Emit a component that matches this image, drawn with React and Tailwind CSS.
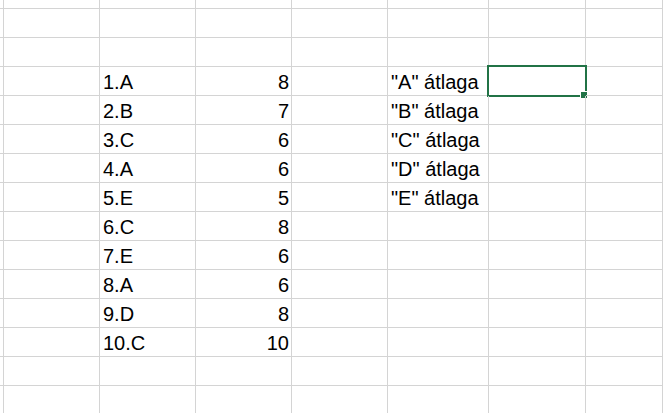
const labels = ["1.A", "2.B", "3.C", "4.A", "5.E", "6.C", "7.E", "8.A", "9.D", "10.C"];
const values = [8, 7, 6, 6, 5, 8, 6, 6, 8, 10];
const averages = ['"A" átlaga', '"B" átlaga', '"C" átlaga', '"D" átlaga', '"E" átlaga'];

const colWidths = ["w-[4px]", "w-[96px]", "w-[96px]", "w-[96px]", "w-[96px]", "w-[101px]", "w-[97px]", "flex-1"];

const Cell = ({ width, height, align = "left", children, selected }) => (
    <div
        className={`${width} ${height} shrink-0 relative flex items-end border-r border-b border-[#d4d4d4] ${
            align === "right" ? "justify-end pr-[2px]" : "justify-start pl-[3px]"
        } pb-[3px]`}
    >
        {children !== undefined && (
            <span className="text-[20px] leading-[20px] text-black whitespace-nowrap">
                {children}
            </span>
        )}
        {selected && (
            <div className="absolute -left-[2px] -top-[2px] w-[100px] h-[32px] border-2 border-[#217346] pointer-events-none">
                <div className="absolute -right-[3px] -bottom-[4px] w-[8px] h-[8px] bg-[#217346] border border-white" />
            </div>
        )}
    </div>
);

export default function App() {
    const rows = Array.from({ length: 15 }, (_, i) => i);

    return (
        <div
            className="w-[663px] h-[413px] overflow-hidden bg-white flex flex-col"
            style={{ fontFamily: '"Liberation Sans", Arial, sans-serif' }}
        >
            {rows.map((r) => {
                const height = r === 0 ? "h-[9px]" : "h-[29px]";
                const dataIdx = r - 3;
                const cells = colWidths.map(() => ({}));
                if (dataIdx >= 0 && dataIdx < labels.length) {
                    cells[2] = { text: labels[dataIdx] };
                    cells[3] = { text: values[dataIdx], align: "right" };
                }
                if (dataIdx >= 0 && dataIdx < averages.length) {
                    cells[5] = { text: averages[dataIdx] };
                }
                if (dataIdx === 0) cells[6] = { selected: true };

                return (
                    <div key={r} className="flex shrink-0">
                        {colWidths.map((w, c) => (
                            <Cell
                                key={c}
                                width={w}
                                height={height}
                                align={cells[c].align}
                                selected={cells[c].selected}
                            >
                                {cells[c].text}
                            </Cell>
                        ))}
                    </div>
                );
            })}
        </div>
    );
}
